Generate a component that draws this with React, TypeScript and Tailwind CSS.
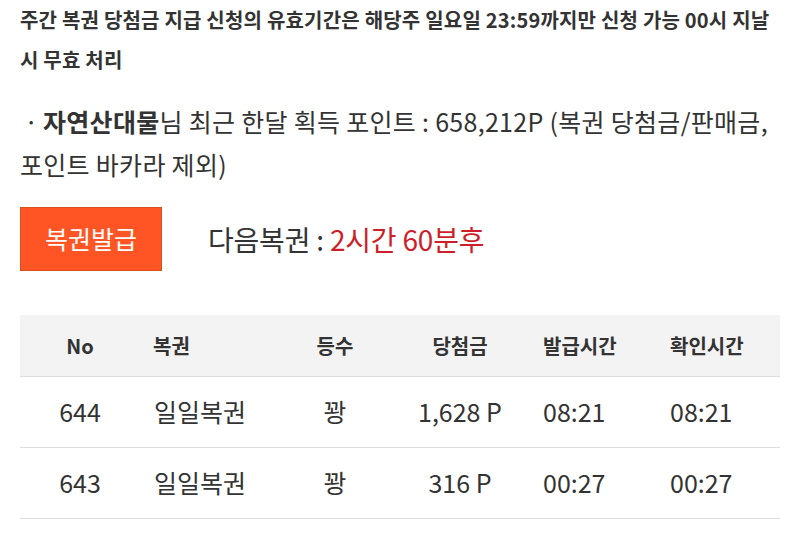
const rows = [
  { no: 644, name: "일일복권", rank: "꽝", prize: "1,628 P", issued: "08:21", checked: "08:21" },
  { no: 643, name: "일일복권", rank: "꽝", prize: "316 P", issued: "00:27", checked: "00:27" },
];

const cols = "grid grid-cols-[120px_150px_90px_160px_127px_113px]";

export default function App() {
  return (
    <div
      className="w-[800px] h-[537px] overflow-hidden bg-white text-[#333]"
      style={{ fontFamily: '"Noto Sans CJK KR", "Noto Sans", sans-serif' }}
    >
      <div className="px-5">
        <p className="text-[20px] font-bold leading-[40px] tracking-[0.2px] whitespace-nowrap">
          주간 복권 당첨금 지급 신청의 유효기간은 해당주 일요일 23:59까지만 신청 가능 00시 지날
          <br />시 무효 처리
        </p>

        <p className="mt-[20px] text-[25px] leading-[43px] tracking-[0.3px] whitespace-nowrap">
          <span className="inline-block w-[23px] text-center">·</span>
          <b className="font-bold">자연산대물</b>님 최근 한달 획득 포인트 : 658,212P (복권 당첨금/판매금,
          <br />
          포인트 바카라 제외)
        </p>

        <div className="mt-[21px] flex items-center">
          <button className="w-[142px] h-[64px] bg-[#ff5524] border border-[#d9501f] text-white text-[25px]">
            복권발급
          </button>
          <div className="ml-[46px] text-[28px] tracking-[-0.2px]">
            다음복권 : <span className="text-[#cc1f2a]">2시간 60분후</span>
          </div>
        </div>

        <div className="mt-[44px] w-[760px]">
          <div className={`${cols} h-[62px] items-center bg-[#f3f3f3] border-b border-[#dcdcdc] text-[20px] font-bold`}>
            <div className="text-center">No</div>
            <div className="pl-[13px]">복권</div>
            <div className="text-center">등수</div>
            <div className="text-center">당첨금</div>
            <div className="pl-[3px]">발급시간</div>
            <div className="pl-[3px]">확인시간</div>
          </div>
          {rows.map((r) => (
            <div
              key={r.no}
              className={`${cols} h-[71px] items-center border-b border-[#dcdcdc] text-[25px]`}
            >
              <div className="text-center">{r.no}</div>
              <div className="pl-[14px]">{r.name}</div>
              <div className="text-center">{r.rank}</div>
              <div className="text-center">{r.prize}</div>
              <div className="pl-[3px]">{r.issued}</div>
              <div className="pl-[3px]">{r.checked}</div>
            </div>
          ))}
        </div>
      </div>
    </div>
  );
}
